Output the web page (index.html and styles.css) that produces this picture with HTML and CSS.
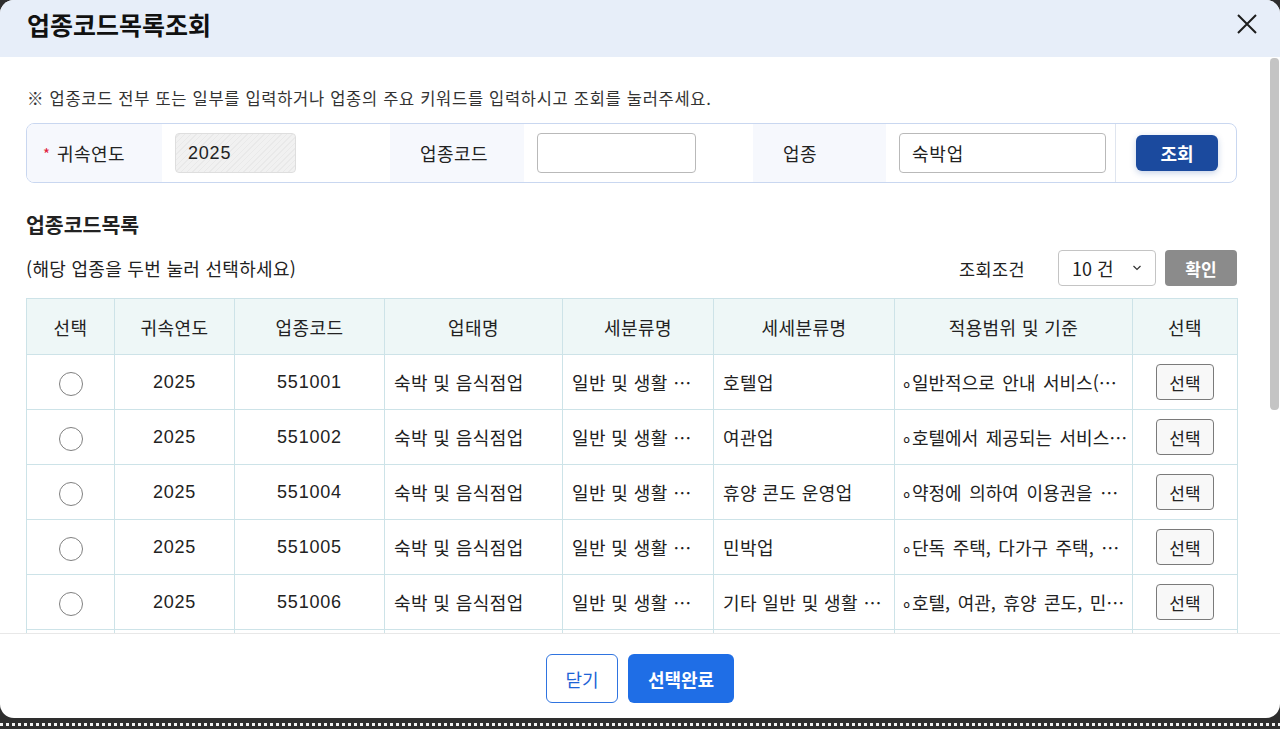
FILE: index.html
```html
<!DOCTYPE html>
<html lang="ko">
<head>
  <meta charset="utf-8">
  <title>업종코드목록조회</title>
  <link rel="stylesheet" href="styles.css">
</head>
<body>
  <div class="modal">
    <div class="modal-header">
      <h2>업종코드목록조회</h2>
      <button class="close-btn" aria-label="닫기">
        <svg width="24" height="24" viewBox="0 0 24 24"><path d="M3 3 L21 21 M21 3 L3 21" stroke="#1d1d1d" stroke-width="2" fill="none"/></svg>
      </button>
    </div>

    <div class="modal-body">
      <div class="scroll-area">
        <p class="notice">※ 업종코드 전부 또는 일부를 입력하거나 업종의 주요 키워드를 입력하시고 조회를 눌러주세요.</p>

        <div class="search-box">
          <div class="label"><span class="req">*</span>귀속연도</div>
          <div class="field"><input type="text" class="readonly" value="2025" readonly></div>
          <div class="label">업종코드</div>
          <div class="field"><input type="text" class="code-input"></div>
          <div class="label">업종</div>
          <div class="field"><input type="text" class="name-input" value="숙박업"></div>
          <div class="btn-cell"><button class="search-btn">조회</button></div>
        </div>

        <h3 class="section-title">업종코드목록</h3>

        <div class="toolbar">
          <span class="hint">(해당 업종을 두번 눌러 선택하세요)</span>
          <div class="filter">
            <span class="filter-label">조회조건</span>
            <div class="select">10 건
              <svg width="10" height="6" viewBox="0 0 10 6"><path d="M1.5 1 L5 4.5 L8.5 1" stroke="#333" stroke-width="1.2" fill="none"/></svg>
            </div>
            <button class="confirm-btn">확인</button>
          </div>
        </div>

        <table class="code-table">
          <colgroup>
            <col style="width: 88px">
            <col style="width: 120px">
            <col style="width: 150px">
            <col style="width: 178px">
            <col style="width: 151px">
            <col style="width: 181px">
            <col style="width: 238px">
            <col style="width: 105px">
          </colgroup>
          <thead>
            <tr>
              <th>선택</th>
              <th>귀속연도</th>
              <th>업종코드</th>
              <th>업태명</th>
              <th>세분류명</th>
              <th>세세분류명</th>
              <th>적용범위 및 기준</th>
              <th>선택</th>
            </tr>
          </thead>
          <tbody>
            <tr>
              <td class="c"><span class="radio"></span></td>
              <td class="c num">2025</td>
              <td class="c num">551001</td>
              <td class="t">숙박 및 음식점업</td>
              <td class="t">일반 및 생활 숙박시설 운영업</td>
              <td class="t">호텔업</td>
              <td class="t rng">∘일반적으로 안내 서비스(프런트)를 제공하는 숙박시설</td>
              <td class="c"><button class="pick-btn">선택</button></td>
            </tr>
            <tr>
              <td class="c"><span class="radio"></span></td>
              <td class="c num">2025</td>
              <td class="c num">551002</td>
              <td class="t">숙박 및 음식점업</td>
              <td class="t">일반 및 생활 숙박시설 운영업</td>
              <td class="t">여관업</td>
              <td class="t rng">∘호텔에서 제공되는 서비스보다 적은 서비스를 제공</td>
              <td class="c"><button class="pick-btn">선택</button></td>
            </tr>
            <tr>
              <td class="c"><span class="radio"></span></td>
              <td class="c num">2025</td>
              <td class="c num">551004</td>
              <td class="t">숙박 및 음식점업</td>
              <td class="t">일반 및 생활 숙박시설 운영업</td>
              <td class="t">휴양 콘도 운영업</td>
              <td class="t rng">∘약정에 의하여 이용권을 가진 자에게 제공</td>
              <td class="c"><button class="pick-btn">선택</button></td>
            </tr>
            <tr>
              <td class="c"><span class="radio"></span></td>
              <td class="c num">2025</td>
              <td class="c num">551005</td>
              <td class="t">숙박 및 음식점업</td>
              <td class="t">일반 및 생활 숙박시설 운영업</td>
              <td class="t">민박업</td>
              <td class="t rng">∘단독 주택, 다가구 주택, 아파트 등을 이용</td>
              <td class="c"><button class="pick-btn">선택</button></td>
            </tr>
            <tr>
              <td class="c"><span class="radio"></span></td>
              <td class="c num">2025</td>
              <td class="c num">551006</td>
              <td class="t">숙박 및 음식점업</td>
              <td class="t">일반 및 생활 숙박시설 운영업</td>
              <td class="t">기타 일반 및 생활 숙박시설 운영업</td>
              <td class="t rng">∘호텔, 여관, 휴양 콘도, 민박업 이외의 숙박시설</td>
              <td class="c"><button class="pick-btn">선택</button></td>
            </tr>
            <tr>
              <td class="c"><span class="radio"></span></td>
              <td class="c num">2025</td>
              <td class="c num">551007</td>
              <td class="t">숙박 및 음식점업</td>
              <td class="t">일반 및 생활 숙박시설 운영업</td>
              <td class="t">기숙사 및 고시원 운영업</td>
              <td class="t rng">∘학생 및 근로자 등에게 숙박을 제공</td>
              <td class="c"><button class="pick-btn">선택</button></td>
            </tr>
          </tbody>
        </table>
      </div>
      <div class="scrollbar"><div class="thumb"></div></div>
    </div>

    <div class="modal-footer">
      <button class="btn-outline">닫기</button>
      <button class="btn-primary">선택완료</button>
    </div>
  </div>
  <div class="edge"></div>
</body>
</html>
```

FILE: styles.css
```css
body {
  margin: 0;
  height: 729px;
  overflow: hidden;
  background: #2e2e2e;
  font-family: "Noto Sans CJK KR", sans-serif;
  color: #222;
}

button {
  font-family: inherit;
  cursor: pointer;
}

.modal {
  height: 718px;
  background: white;
  border-radius: 14px;
  display: flex;
  flex-direction: column;
  overflow: hidden;
}

.modal-header {
  height: 57px;
  box-sizing: border-box;
  padding: 0 21px 10px 27px;
  background: #e7eef9;
  display: flex;
  align-items: center;
  justify-content: space-between;
  flex-shrink: 0;
}

.modal-header h2 {
  margin: 0;
  font-size: 25px;
  font-weight: bold;
  color: #111;
}

.close-btn {
  border: none;
  background: none;
  padding: 0;
  width: 24px;
  height: 24px;
}

.modal-body {
  flex: 1;
  display: flex;
  min-height: 0;
}

.scroll-area {
  flex: 1;
  overflow: hidden;
  padding: 0 33px 0 26px;
}

.scrollbar {
  width: 10px;
  padding-top: 1px;
}

.scrollbar .thumb {
  width: 9px;
  height: 352px;
  background: #c4c4c4;
  border-radius: 4px;
}

.notice {
  margin: 0;
  padding: 29px 0 0 1px;
  line-height: 24px;
  font-size: 16.5px;
  letter-spacing: 0.7px;
  color: #333;
}

/* 검색 영역 */
.search-box {
  margin-top: 13px;
  height: 60px;
  box-sizing: border-box;
  border: 1px solid #c9d7f0;
  border-radius: 8px;
  overflow: hidden;
  display: grid;
  grid-template-columns: 135px 228px 134px 229px 133px 229px 1fr;
}

.search-box .label {
  background: #f6f8fd;
  display: flex;
  align-items: center;
  padding-left: 30px;
  font-size: 18px;
  letter-spacing: 0.4px;
  color: #222;
}

.req {
  color: #e0203a;
  margin-left: -14px;
  width: 14px;
  font-size: 15px;
}

.search-box .field {
  display: flex;
  align-items: center;
  padding-left: 13px;
}

.search-box input {
  height: 40px;
  box-sizing: border-box;
  border: 1px solid #b9b9b9;
  border-radius: 4px;
  padding: 0 12px;
  font-size: 18px;
  font-family: "Liberation Sans", "Noto Sans CJK KR", sans-serif;
  letter-spacing: 0.8px;
  color: #222;
  background: white;
}

.search-box input.readonly {
  width: 121px;
  border-color: #dedede;
  background: repeating-linear-gradient(-45deg, #e9e9e9 0 1px, #f1f1f1 1px 4px);
}

.search-box input.code-input {
  width: 159px;
}

.search-box input.name-input {
  width: 207px;
}

.btn-cell {
  border-left: 1px solid #dfe5ef;
  display: flex;
  align-items: center;
  padding-left: 20px;
}

.search-btn {
  width: 82px;
  height: 36px;
  border: none;
  border-radius: 6px;
  background: #1b4a9e;
  color: white;
  font-size: 18px;
  font-weight: bold;
  box-shadow: 0 2px 6px rgba(27, 74, 158, 0.25);
}

.section-title {
  margin: 27px 0 0;
  line-height: 28px;
  font-size: 20.5px;
  font-weight: bold;
  color: #222;
}

.toolbar {
  margin-top: 12px;
  height: 36px;
  display: flex;
  align-items: center;
  justify-content: space-between;
}

.hint {
  font-size: 18px;
  letter-spacing: 0.3px;
  color: #222;
}

.filter {
  display: flex;
  align-items: center;
}

.filter-label {
  font-size: 17.5px;
  letter-spacing: 0.4px;
  margin-right: 33px;
}

.select {
  width: 98px;
  height: 36px;
  box-sizing: border-box;
  border: 1px solid #c4c4c4;
  border-radius: 4px;
  display: flex;
  align-items: center;
  justify-content: space-between;
  padding: 0 13px 0 13px;
  font-size: 18px;
}

.confirm-btn {
  margin-left: 9px;
  width: 72px;
  height: 36px;
  border: none;
  border-radius: 4px;
  background: #8b8b8b;
  color: white;
  font-size: 17px;
  font-weight: bold;
}

/* 목록 테이블 */
.code-table {
  margin-top: 12px;
  width: 1211px;
  table-layout: fixed;
  border-collapse: collapse;
  font-size: 18px;
  letter-spacing: 0.4px;
}

.code-table th,
.code-table td {
  border: 1px solid #cde3e8;
  padding: 0;
  white-space: nowrap;
  overflow: hidden;
  text-overflow: ellipsis;
}

.code-table th {
  height: 55px;
  background: #eef7f7;
  font-weight: normal;
  color: #222;
}

.code-table td {
  height: 54px;
  color: #222;
}

.code-table td.c {
  text-align: center;
}

.code-table td.num {
  font-family: "Liberation Sans", sans-serif;
  letter-spacing: 0.8px;
}

.code-table td.t {
  padding: 0 8px 0 9px;
}

.code-table td.rng {
  padding: 0 4px 0 6px;
  letter-spacing: 0;
  word-spacing: 2.5px;
}

.radio {
  display: inline-block;
  width: 24px;
  height: 24px;
  box-sizing: border-box;
  border: 1px solid #808080;
  border-radius: 50%;
  vertical-align: middle;
}

.pick-btn {
  width: 58px;
  height: 36px;
  border: 1px solid #7a7a7a;
  border-radius: 4px;
  background: #f8f8f8;
  font-size: 17px;
  color: #222;
  padding: 0;
}

.modal-footer {
  flex-shrink: 0;
  height: 85px;
  box-sizing: border-box;
  border-top: 1px solid #e8e8e8;
  display: flex;
  justify-content: center;
  align-items: center;
  gap: 10px;
  padding-top: 5px;
}

.btn-outline {
  width: 72px;
  height: 49px;
  border: 1px solid #2f74e0;
  border-radius: 6px;
  background: white;
  color: #1d63d6;
  font-size: 18px;
}

.btn-primary {
  width: 106px;
  height: 49px;
  border: none;
  border-radius: 6px;
  background: #1f6ee6;
  color: white;
  font-size: 18px;
  font-weight: bold;
}

.edge {
  height: 3px;
  margin-top: 5px;
  background: repeating-linear-gradient(90deg, #f2f2f2 0 3px, transparent 3px 6px);
}
```
